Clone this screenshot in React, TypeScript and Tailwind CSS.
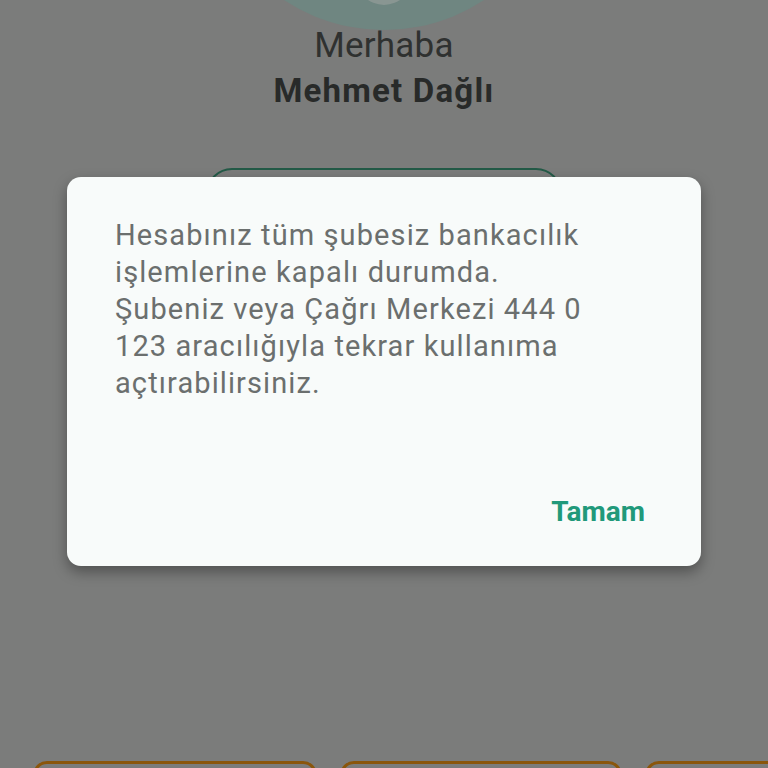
export default function App() {
  return (
    <div className="relative h-[768px] w-full overflow-hidden bg-[#7b7c7b] font-['Roboto',sans-serif]">
      <div className="flex flex-col items-center">
        <div className="-mt-[334px] flex h-[364px] w-[364px] items-end justify-center rounded-full bg-[#6f8681]">
          <div className="mb-[25px] h-[40px] w-[56px] rounded-b-full bg-[#899692]" />
        </div>
        <p className="-mt-[2px] text-[35px] leading-[36px] tracking-[0.2px] text-[#2f3130]">Merhaba</p>
        <p className="mt-[9px] text-[33px] font-bold leading-[36px] tracking-[1.2px] text-[#282a29]">Mehmet Dağlı</p>
        <div className="mt-[59px] h-[52px] w-[356px] rounded-[26px] border-2 border-[#235a47]" />
      </div>

      <div className="mt-[541px] flex gap-[23px] pl-[33px]">
        <div className="h-[100px] w-[284px] shrink-0 rounded-[14px] border-[3px] border-[#8a560c]" />
        <div className="h-[100px] w-[282px] shrink-0 rounded-[14px] border-[3px] border-[#8a560c]" />
        <div className="h-[100px] w-[284px] shrink-0 rounded-[14px] border-[3px] border-[#8a560c]" />
      </div>

      <div className="absolute left-[67px] top-[177px] flex h-[389px] w-[634px] flex-col rounded-[14px] bg-[#f8fbfa] pt-[40px] shadow-[0_6px_14px_rgba(0,0,0,0.35)]">
        <p className="pl-[48px] pr-[96px] text-[29px] leading-[37px] tracking-[1.1px] text-[#6b6f6e]">
          Hesabınız tüm şubesiz bankacılık işlemlerine kapalı durumda. Şubeniz veya Çağrı Merkezi 444 0 123 aracılığıyla tekrar kullanıma açtırabilirsiniz.
        </p>
        <div className="mt-[95px] flex justify-end pr-[56px]">
          <button className="text-[28px] font-bold leading-[30px] text-[#21997a]">Tamam</button>
        </div>
      </div>
    </div>
  );
}
